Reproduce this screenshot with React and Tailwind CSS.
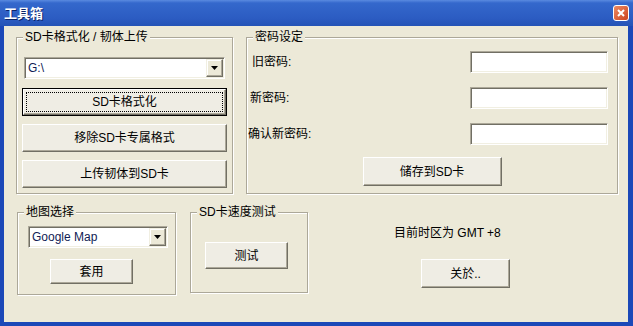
import React from "react";

// classic win32 bits
const Btn = ({ children, className = "", isDefault = false }) => {
  if (isDefault) {
    return (
      <button className={`flex border border-black bg-[#efede4] p-0 ${className}`}>
        <span className="flex flex-1 border border-t-white border-l-white border-b-[#716f64] border-r-[#716f64] p-[2px] shadow-[inset_-1px_-1px_0_#aca899]">
          <span className="flex flex-1 items-center justify-center border border-dotted border-black">
            {children}
          </span>
        </span>
      </button>
    );
  }
  return (
    <button
      className={`flex items-center justify-center border border-t-white border-l-white border-b-[#716f64] border-r-[#716f64] bg-[#efede4] shadow-[inset_-1px_-1px_0_#aca899] ${className}`}
    >
      {children}
    </button>
  );
};

const Sunken = ({ className = "", children }) => (
  <div
    className={`flex border border-t-[#aca899] border-l-[#aca899] border-b-white border-r-white bg-white p-px shadow-[inset_1px_1px_0_#716f64,inset_-1px_-1px_0_#f1efe2] ${className}`}
  >
    {children}
  </div>
);

const Combo = ({ value, className = "" }) => (
  <Sunken className={`h-[22px] ${className}`}>
    <span className="flex flex-1 items-center pl-[2px] text-[#101c55]">{value}</span>
    <span className="flex w-[17px] items-center justify-center border border-t-[#f1efe2] border-l-[#f1efe2] border-b-[#716f64] border-r-[#716f64] bg-[#ece9d8] shadow-[inset_-1px_-1px_0_#aca899,inset_1px_1px_0_#fff]">
      <svg width="7" height="4" viewBox="0 0 7 4">
        <path d="M0 0h7L3.5 4z" fill="#000" />
      </svg>
    </span>
  </Sunken>
);

const Group = ({ title, className = "", children }) => (
  <div className={`relative border border-[#aca899] shadow-[inset_1px_1px_0_#fff,1px_1px_0_#fff] ${className}`}>
    <span className="absolute -top-[8px] left-[6px] bg-[#ece9d8] px-[2px] leading-[14px]">{title}</span>
    {children}
  </div>
);

export default function App() {
  return (
    <div className="flex h-[326px] w-[633px] flex-col bg-[#1b48b8] font-['Liberation_Sans','Noto_Sans_CJK_SC',sans-serif] text-[12px] text-black">
      {/* Title bar */}
      <div className="flex h-[26px] items-center justify-between bg-[linear-gradient(to_bottom,#5a8ae0_0px,#3468cc_3px,#2c5cc2_18px,#2453b6_26px)] pl-[4px] pr-[4px]">
        <span className="text-[13px] font-bold leading-none text-white [text-shadow:1px_1px_0_#0a246a]">工具箱</span>
        <span className="flex h-[16px] w-[16px] items-center justify-center rounded-[3px] border border-white bg-[linear-gradient(135deg,#ec8a62,#cc4420)]">
          <svg width="8" height="8" viewBox="0 0 8 8">
            <path d="M1 1l6 6M7 1L1 7" stroke="#fff" strokeWidth="2" />
          </svg>
        </span>
      </div>

      {/* Client area */}
      <div className="mb-[4px] ml-[4px] mr-[5px] flex flex-1 flex-col bg-[#ece9d8] pl-[12px] pr-[10px] pt-[11px]">
        <div className="flex gap-[13px]">
          {/* SD card format */}
          <Group title="SD卡格式化 / 韧体上传" className="h-[157px] w-[217px]">
            <div className="flex flex-col px-[5px] pt-[19px]">
              <Combo value="G:\" className="mx-[2px]" />
              <Btn isDefault className="mt-[9px] h-[28px]">SD卡格式化</Btn>
              <Btn className="mt-[8px] h-[28px]">移除SD卡专属格式</Btn>
              <Btn className="mt-[8px] h-[28px]">上传韧体到SD卡</Btn>
            </div>
          </Group>

          {/* Password */}
          <Group title="密码设定" className="h-[157px] flex-1">
            <div className="flex flex-col gap-[14px] pr-[9px] pt-[13px]">
              <div className="flex h-[22px] items-center justify-between pl-[5px]">
                <span>旧密码:</span>
                <Sunken className="h-[22px] w-[138px]" />
              </div>
              <div className="flex h-[22px] items-center justify-between pl-[3px]">
                <span>新密码:</span>
                <Sunken className="h-[22px] w-[138px]" />
              </div>
              <div className="flex h-[22px] items-center justify-between pl-[1px]">
                <span>确认新密码:</span>
                <Sunken className="h-[22px] w-[138px]" />
              </div>
            </div>
            <div className="mt-[12px] flex justify-center">
              <Btn className="h-[29px] w-[139px]">储存到SD卡</Btn>
            </div>
          </Group>
        </div>

        <div className="mt-[18px] flex pl-[1px]">
          {/* Map */}
          <Group title="地图选择" className="h-[83px] w-[159px]">
            <div className="flex flex-col pl-[10px] pr-[7px] pt-[13px]">
              <Combo value="Google Map" />
              <Btn className="ml-[22px] mt-[11px] h-[25px] w-[83px]">套用</Btn>
            </div>
          </Group>

          {/* Speed test */}
          <Group title="SD卡速度测试" className="ml-[14px] h-[81px] w-[118px]">
            <div className="pl-[14px] pt-[29px]">
              <Btn className="h-[27px] w-[83px]">测试</Btn>
            </div>
          </Group>

          <div className="flex flex-col items-start pl-[86px] pt-[14px]">
            <span className="leading-[14px]">目前时区为 GMT +8</span>
            <Btn className="ml-[27px] mt-[19px] h-[29px] w-[89px]">关於..</Btn>
          </div>
        </div>
      </div>
    </div>
  );
}
